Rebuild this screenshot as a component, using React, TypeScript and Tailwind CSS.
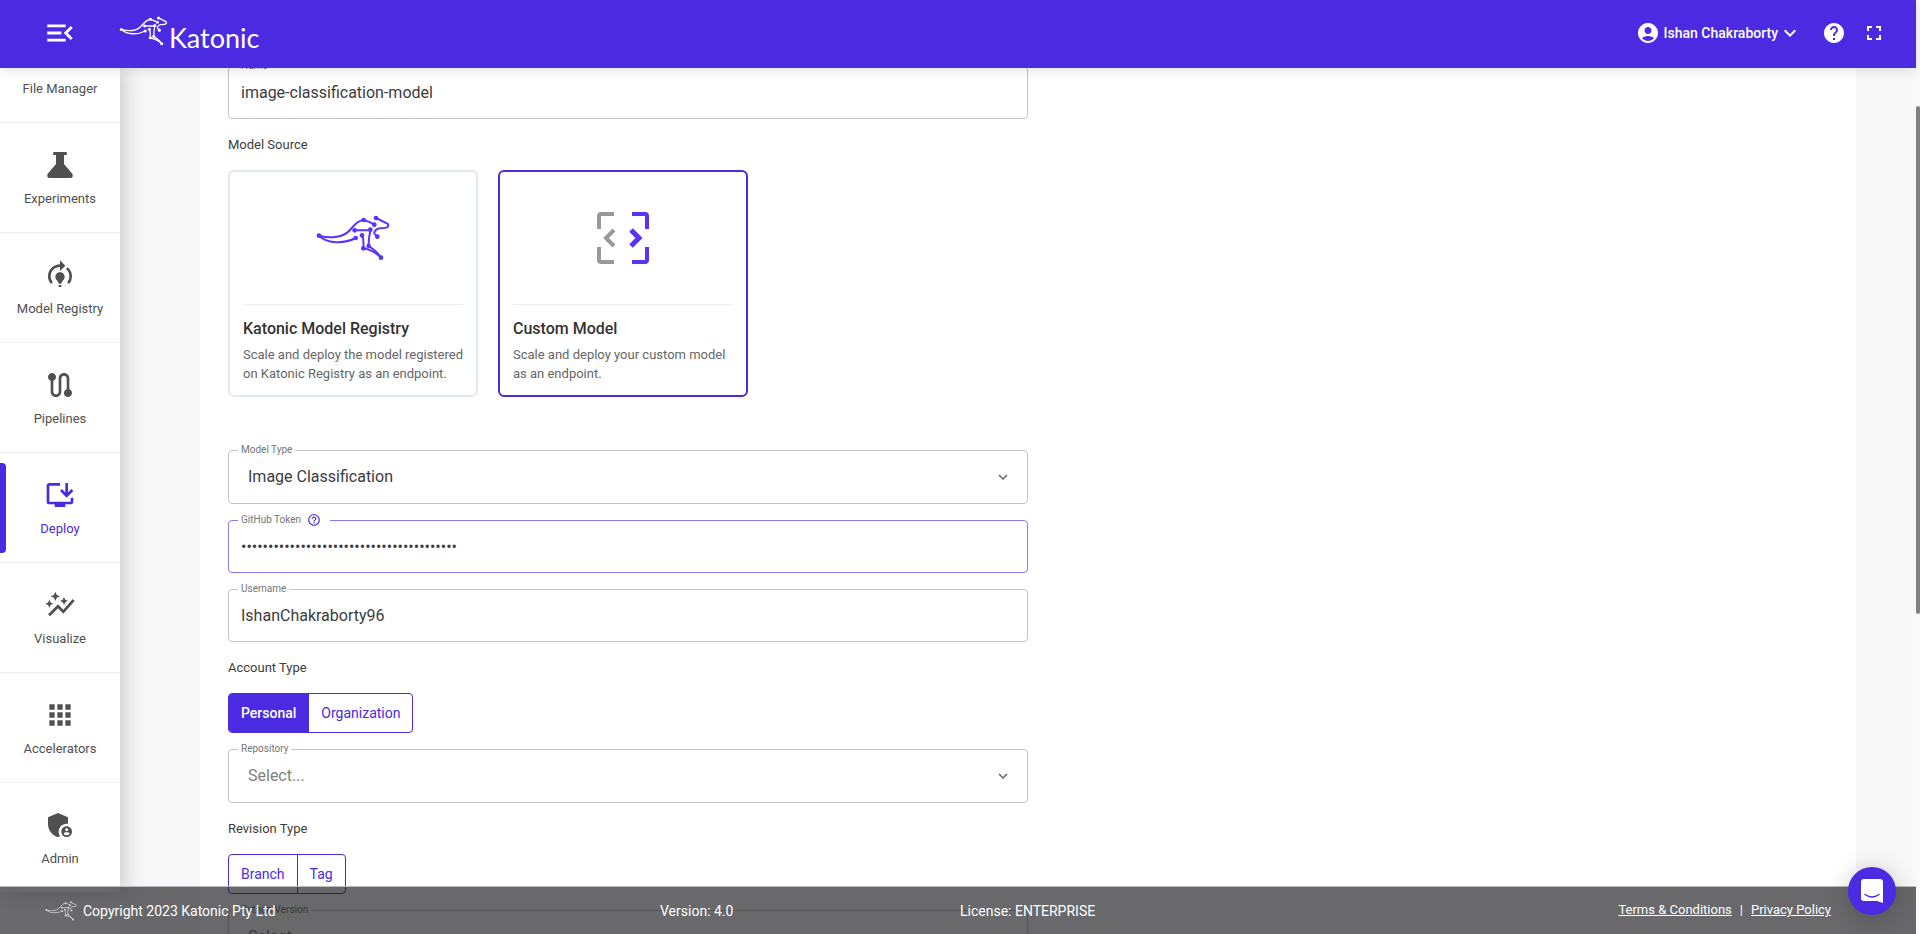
import { useState } from "react";
import type { ComponentType, ReactNode } from "react";
import {
  MdAccountCircle,
  MdAdminPanelSettings,
  MdApps,
  MdAutoGraph,
  MdFolder,
  MdFullscreen,
  MdHelp,
  MdHelpOutline,
  MdKeyboardArrowDown,
  MdMenuOpen,
  MdModelTraining,
  MdOutlineInstallDesktop,
  MdRoute,
} from "react-icons/md";

function Flask({ className }: { className?: string }) {
  return (
    <svg viewBox="0 0 32 32" className={className} fill="currentColor" aria-hidden="true">
      <path d="M10 3H22Q23 3 23 4.500Q23 6 22 6H20V15L28.500 25Q29.500 29 26.500 29H5.500Q2.500 29 3.500 25L12 15V6H10Q9 6 9 4.500Q9 3 10 3Z" />
    </svg>
  );
}

const navItems: { label: string; icon: ComponentType<{ className?: string }> }[] = [
  { label: "File Manager", icon: MdFolder },
  { label: "Experiments", icon: Flask },
  { label: "Model Registry", icon: MdModelTraining },
  { label: "Pipelines", icon: MdRoute },
  { label: "Deploy", icon: MdOutlineInstallDesktop },
  { label: "Visualize", icon: MdAutoGraph },
  { label: "Accelerators", icon: MdApps },
  { label: "Admin", icon: MdAdminPanelSettings },
];

function Kangaroo({ className }: { className: string }) {
  const joints = [
    [57, 104],
    [167, 111],
    [164, 88],
    [191, 57],
    [223, 71],
    [228, 51],
    [211, 86],
    [186, 103],
    [232, 107],
    [190, 142],
    [206, 135],
    [243, 170],
  ];
  return (
    <svg viewBox="48 42 222 138" className={className} aria-hidden="true">
      <g
        fill="none"
        stroke="currentColor"
        strokeWidth="6"
        strokeLinecap="round"
        strokeLinejoin="round"
      >
        <path d="M57 104C88 112 126 112 147 90C164 72 172 59 191 57Q208 61 223 71" />
        <path d="M57 104C84 130 134 128 167 111" />
        <path d="M164 88H211C208 104 205 118 206 135C220 144 234 154 243 170" />
        <path d="M186 103C193 116 190 128 190 142C210 146 228 154 243 170" />
        <path d="M228 51L262 68Q267 71 263 78Q259 81 240 82C228 83 222 91 223 98L232 107" />
      </g>
      {joints.map(([x, y]) => (
        <circle key={`${x}-${y}`} cx={x} cy={y} r="7" fill="currentColor" />
      ))}
    </svg>
  );
}

function CodeFrame() {
  return (
    <svg viewBox="0 0 52 52" className="size-[52px]" fill="none" strokeWidth="4" aria-hidden="true">
      <path d="M17 2H4Q2 2 2 4V17M2 35V48Q2 50 4 50H17" stroke="#999" />
      <path d="M17 18L9 26L17 34" stroke="#999" />
      <path d="M35 2H48Q50 2 50 4V17M50 35V48Q50 50 48 50H35" stroke="#5a32fa" />
      <path d="M34 18L42 26L34 34" stroke="#5a32fa" strokeWidth="5" />
    </svg>
  );
}

function Header() {
  return (
    <header className="relative z-20 flex h-[68px] shrink-0 items-center bg-[#4a2be2] pr-[30px] pb-0.5 pl-[43px] text-white shadow-[0_2px_12px_rgba(0,0,0,0.12)]">
      <button type="button" aria-label="Collapse menu">
        <MdMenuOpen className="size-[34px]" />
      </button>
      <a href="#" className="ml-[42px] flex items-start pt-1" aria-label="Katonic home">
        <Kangaroo className="h-[30px] w-[49px]" />
        <span className="mt-1.5 ml-px font-[Lato] text-[27px] leading-8">Katonic</span>
      </a>
      <div className="ml-auto flex items-center">
        <button type="button" className="flex items-center text-sm font-medium">
          <MdAccountCircle className="mr-1 size-6" />
          Ishan Chakraborty
          <MdKeyboardArrowDown className="size-6" />
        </button>
        <button type="button" aria-label="Help" className="ml-5">
          <MdHelp className="size-6" />
        </button>
        <button type="button" aria-label="Full screen" className="ml-4">
          <MdFullscreen className="size-6" />
        </button>
      </div>
    </header>
  );
}

function Sidebar() {
  return (
    <nav className="z-10 flex w-[120px] shrink-0 flex-col justify-end bg-white shadow-[4px_0_20px_rgba(0,0,0,0.2)]">
      {navItems.map(({ label, icon: Icon }) => {
        const active = label === "Deploy";
        return (
          <a
            key={label}
            href="#"
            className={`relative flex h-[110px] shrink-0 flex-col items-center border-b border-[#eee] pt-[26px] text-[13px] leading-5 ${
              active ? "text-[#4a2be2]" : "text-[#505050]"
            }`}
          >
            {active && (
              <span className="absolute top-2.5 left-0 h-[90px] w-1.5 rounded-r bg-[#4a2be2]" />
            )}
            <Icon className="mb-2 size-8" />
            {label}
          </a>
        );
      })}
    </nav>
  );
}

function Field({
  label,
  id,
  focused,
  help,
  children,
}: {
  label: string;
  id: string;
  focused?: boolean;
  help?: boolean;
  children: ReactNode;
}) {
  return (
    <fieldset
      className={`rounded border px-[9px] ${
        focused ? "border-[#8d78ee]" : "border-[#c4c4c4]"
      }`}
    >
      <legend className="flex h-4 items-center px-[3px] text-[10px] leading-4 text-[#757575]">
        <label htmlFor={id}>{label}</label>
        {help && <MdHelpOutline className="mr-1.5 ml-1.5 size-3.5 text-[#4a2be2]" />}
      </legend>
      {children}
    </fieldset>
  );
}

function TextField({
  label,
  id,
  value,
  type = "text",
  focused,
  help,
}: {
  label: string;
  id: string;
  value: string;
  type?: string;
  focused?: boolean;
  help?: boolean;
}) {
  return (
    <Field label={label} id={id} focused={focused} help={help}>
      <input
        id={id}
        type={type}
        defaultValue={value}
        className="mb-2 h-9 w-full pl-[3px] outline-none"
      />
    </Field>
  );
}

function SelectField({
  label,
  id,
  value,
}: {
  label: string;
  id: string;
  value?: string;
}) {
  return (
    <Field label={label} id={id}>
      <div className="mb-[7px] flex items-center">
        <select
          id={id}
          className={`h-[38px] grow appearance-none pl-2.5 text-base outline-none ${
            value ? "text-[#3c3c3c]" : "text-[#808080]"
          }`}
        >
          <option>{value ?? "Select..."}</option>
        </select>
        <MdKeyboardArrowDown className="mr-1.5 size-[18px] text-[#666]" />
      </div>
    </Field>
  );
}

function SourceCard({
  title,
  text,
  selected,
  onSelect,
  children,
}: {
  title: string;
  text: string;
  selected: boolean;
  onSelect: () => void;
  children: ReactNode;
}) {
  return (
    <button
      type="button"
      aria-pressed={selected}
      onClick={onSelect}
      className={`flex h-[227px] w-[250px] flex-col rounded-md border-2 px-[13px] text-left ${
        selected ? "border-[#4a2be2]" : "border-[#e2e9f5]"
      }`}
    >
      <span className="flex h-[133px] w-full shrink-0 items-center justify-center border-b border-[#eee]">
        {children}
      </span>
      <span className="mt-3 text-base leading-6 font-medium text-[#333]">{title}</span>
      <span className="-mr-2 mt-1 text-[13px] leading-[19px] text-[#666]">{text}</span>
    </button>
  );
}

function ToggleGroup({
  options,
  value,
  onChange,
}: {
  options: string[];
  value: string;
  onChange: (option: string) => void;
}) {
  return (
    <div className="flex h-10 w-fit divide-x divide-[#4a2be2] overflow-hidden rounded border border-[#4a2be2] text-sm">
      {options.map((option) => (
        <button
          key={option}
          type="button"
          aria-pressed={option === value}
          onClick={() => onChange(option)}
          className={`px-3 ${
            option === value
              ? "bg-[#4a2be2] font-medium text-white"
              : "text-[#4a2be2]"
          }`}
        >
          {option}
        </button>
      ))}
    </div>
  );
}

function SectionLabel({ children }: { children: ReactNode }) {
  return <h3 className="mt-4 mb-[15px] text-[13px] leading-5">{children}</h3>;
}

function DeployForm() {
  const [source, setSource] = useState("custom");
  const [account, setAccount] = useState("Personal");
  const [revision, setRevision] = useState("");

  return (
    <form className="flex w-[800px] flex-col">
      <TextField label="Name" id="name" value="image-classification-model" />

      <SectionLabel>Model Source</SectionLabel>
      <div className="flex gap-5">
        <SourceCard
          title="Katonic Model Registry"
          text="Scale and deploy the model registered on Katonic Registry as an endpoint."
          selected={source === "registry"}
          onSelect={() => setSource("registry")}
        >
          <Kangaroo className="h-[46px] w-[74px] text-[#5a32fa]" />
        </SourceCard>
        <SourceCard
          title="Custom Model"
          text="Scale and deploy your custom model as an endpoint."
          selected={source === "custom"}
          onSelect={() => setSource("custom")}
        >
          <CodeFrame />
        </SourceCard>
      </div>

      <div className="mt-[45px] flex flex-col gap-2">
        <SelectField label="Model Type" id="model-type" value="Image Classification" />
        <TextField
          label="GitHub Token"
          id="token"
          type="password"
          value="ghp0123456789abcdefghijklmnopqrstuvwxyz0"
          focused
          help
        />
        <TextField label="Username" id="username" value="IshanChakraborty96" />
      </div>

      <SectionLabel>Account Type</SectionLabel>
      <div className="flex flex-col gap-2">
        <ToggleGroup
          options={["Personal", "Organization"]}
          value={account}
          onChange={setAccount}
        />
        <SelectField label="Repository" id="repository" />
      </div>

      <SectionLabel>Revision Type</SectionLabel>
      <div className="flex flex-col gap-2">
        <ToggleGroup options={["Branch", "Tag"]} value={revision} onChange={setRevision} />
        <SelectField label="Python Version" id="python-version" />
      </div>
    </form>
  );
}

function Footer() {
  return (
    <footer className="absolute inset-x-0 bottom-0 z-20 flex h-12 items-center border-t border-[#bbb] bg-[#18181b]/65 pr-[85px] pl-[45px] text-sm text-white">
      <div className="flex w-[615px] items-center">
        <Kangaroo className="mr-1.5 h-5 w-8 text-[#ccc]" />
        Copyright 2023 Katonic Pty Ltd
      </div>
      <div className="w-[300px]">Version: 4.0</div>
      <div>License: ENTERPRISE</div>
      <div className="ml-auto flex gap-2 text-[13px]">
        <a href="#" className="underline">
          Terms &amp; Conditions
        </a>
        <span>|</span>
        <a href="#" className="underline">
          Privacy Policy
        </a>
      </div>
    </footer>
  );
}

export default function App() {
  return (
    <div className="flex h-screen overflow-hidden bg-[#fafafa] font-[Roboto,sans-serif] text-[#3c3c3c]">
      <div className="relative flex min-w-0 grow flex-col">
        <Header />
        <div className="flex min-h-0 grow">
          <div className="flex shrink-0 bg-white pb-[41px]">
            <Sidebar />
          </div>
          <main className="grow overflow-hidden bg-[#f8f8f8] pr-[60px] pl-20">
            <div className="-mt-2.5 bg-white px-7 pb-10">
              <DeployForm />
            </div>
          </main>
        </div>
        <Footer />
        <button
          type="button"
          aria-label="Open chat"
          className="absolute right-5 bottom-[19px] z-30 flex size-12 items-center justify-center rounded-full bg-[#4a2be2] shadow-[0_2px_24px_rgba(0,0,0,0.2)]"
        >
          <svg viewBox="0 0 22 24" className="h-6 w-[22px]" aria-hidden="true">
            <path d="M3 0H19Q22 0 22 3V24L16 22H3Q0 22 0 19V3Q0 0 3 0Z" fill="#fff" />
            <path d="M4 15.5Q11 20.5 18 15.5" fill="none" stroke="#4a2be2" strokeWidth="1.4" strokeLinecap="round" />
          </svg>
        </button>
      </div>
      <div className="w-1 shrink-0 bg-[#fafafa] pt-[106px]">
        <div className="h-[508px] rounded-sm bg-[#808080]" />
      </div>
    </div>
  );
}
